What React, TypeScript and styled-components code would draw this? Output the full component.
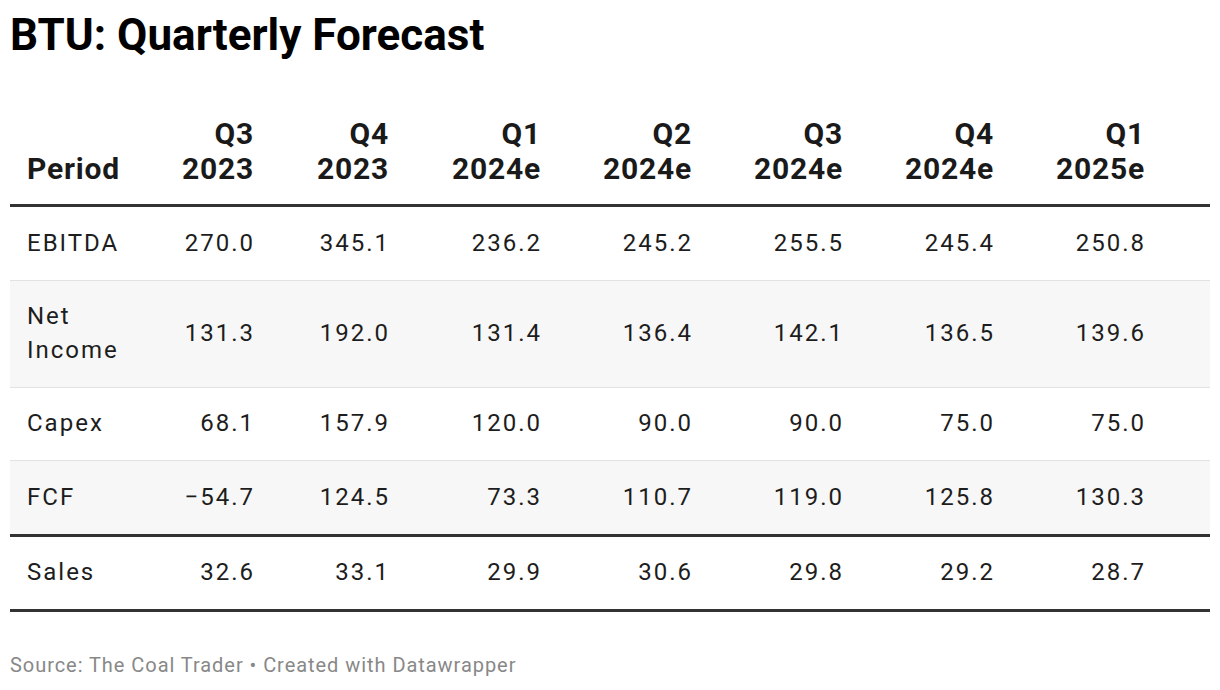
import React from "react";
import styled, { createGlobalStyle } from "styled-components";

const Global = createGlobalStyle`
  html, body { margin: 0; padding: 0; background: #ffffff; }
  body { font-family: Roboto, "Liberation Sans", Arial, sans-serif; }
`;

const Page = styled.div`
  width: 1220px;
  padding: 8px 10px 0 10px;
  box-sizing: border-box;
`;

const Title = styled.h1`
  margin: 0;
  font-size: 44px;
  line-height: 54px;
  font-weight: 700;
  color: #000;
`;

const Table = styled.div`
  margin-top: 54px;
  width: 1200px;
  border-bottom: 3.5px solid #333;
`;

const Row = styled.div<{ $head?: boolean; $striped?: boolean; $rule?: "light" | "heavy" | "none" }>`
  display: grid;
  grid-template-columns: 125px 135px 135px 152px 151px 151px 151px 151px 1fr;
  align-items: ${(p) => (p.$head ? "end" : "center")};
  background: ${(p) => (p.$striped ? "#f7f7f7" : "transparent")};
  border-bottom: ${(p) =>
    p.$rule === "heavy" ? "3.5px solid #333" : p.$rule === "light" ? "1px solid #e2e2e2" : "none"};
  padding: ${(p) => (p.$head ? "0 0 18px 0" : "19.5px 0")};
`;

const Cell = styled.div<{ $head?: boolean; $label?: boolean }>`
  padding: ${(p) =>
    p.$label ? "0 0 0 17px" : p.$head ? "0 16px 0 0" : "0 15px 0 0"};
  font-size: ${(p) => (p.$head ? "30px" : "24px")};
  line-height: ${(p) => (p.$head ? "35px" : "33.5px")};
  letter-spacing: ${(p) => (p.$head ? "0.8px" : "2px")};
  font-weight: ${(p) => (p.$head ? 700 : 400)};
  color: ${(p) => (p.$head ? "#1a1a1a" : "#1d1d1d")};
  text-align: ${(p) => (p.$label ? "left" : "right")};
  white-space: nowrap;
`;

const Footer = styled.div`
  margin-top: 41px;
  font-size: 20px;
  line-height: 24px;
  letter-spacing: 0.95px;
  color: #888;
`;

const periods: [string, string][] = [
  ["Q3", "2023"],
  ["Q4", "2023"],
  ["Q1", "2024e"],
  ["Q2", "2024e"],
  ["Q3", "2024e"],
  ["Q4", "2024e"],
  ["Q1", "2025e"],
];

type DataRow = { label: React.ReactNode; values: string[]; striped: boolean; rule: "light" | "heavy" | "none" };

const rows: DataRow[] = [
  { label: "EBITDA", values: ["270.0", "345.1", "236.2", "245.2", "255.5", "245.4", "250.8"], striped: false, rule: "light" },
  { label: <>Net<br />Income</>, values: ["131.3", "192.0", "131.4", "136.4", "142.1", "136.5", "139.6"], striped: true, rule: "light" },
  { label: "Capex", values: ["68.1", "157.9", "120.0", "90.0", "90.0", "75.0", "75.0"], striped: false, rule: "light" },
  { label: "FCF", values: ["\u221254.7", "124.5", "73.3", "110.7", "119.0", "125.8", "130.3"], striped: true, rule: "heavy" },
  { label: "Sales", values: ["32.6", "33.1", "29.9", "30.6", "29.8", "29.2", "28.7"], striped: false, rule: "none" },
];

export default function App() {
  return (
    <>
      <Global />
      <Page>
        <Title>BTU: Quarterly Forecast</Title>
        <Table>
          <Row $head $rule="heavy">
            <Cell $head $label>Period</Cell>
            {periods.map(([q, y], i) => (
              <Cell $head key={i}>
                {q}
                <br />
                {y}
              </Cell>
            ))}
            <div />
          </Row>
          {rows.map((r, i) => (
            <Row key={i} $striped={r.striped} $rule={r.rule}>
              <Cell $label>{r.label}</Cell>
              {r.values.map((v, j) => (
                <Cell key={j}>{v}</Cell>
              ))}
              <div />
            </Row>
          ))}
        </Table>
        <Footer>Source: The Coal Trader • Created with Datawrapper</Footer>
      </Page>
    </>
  );
}
